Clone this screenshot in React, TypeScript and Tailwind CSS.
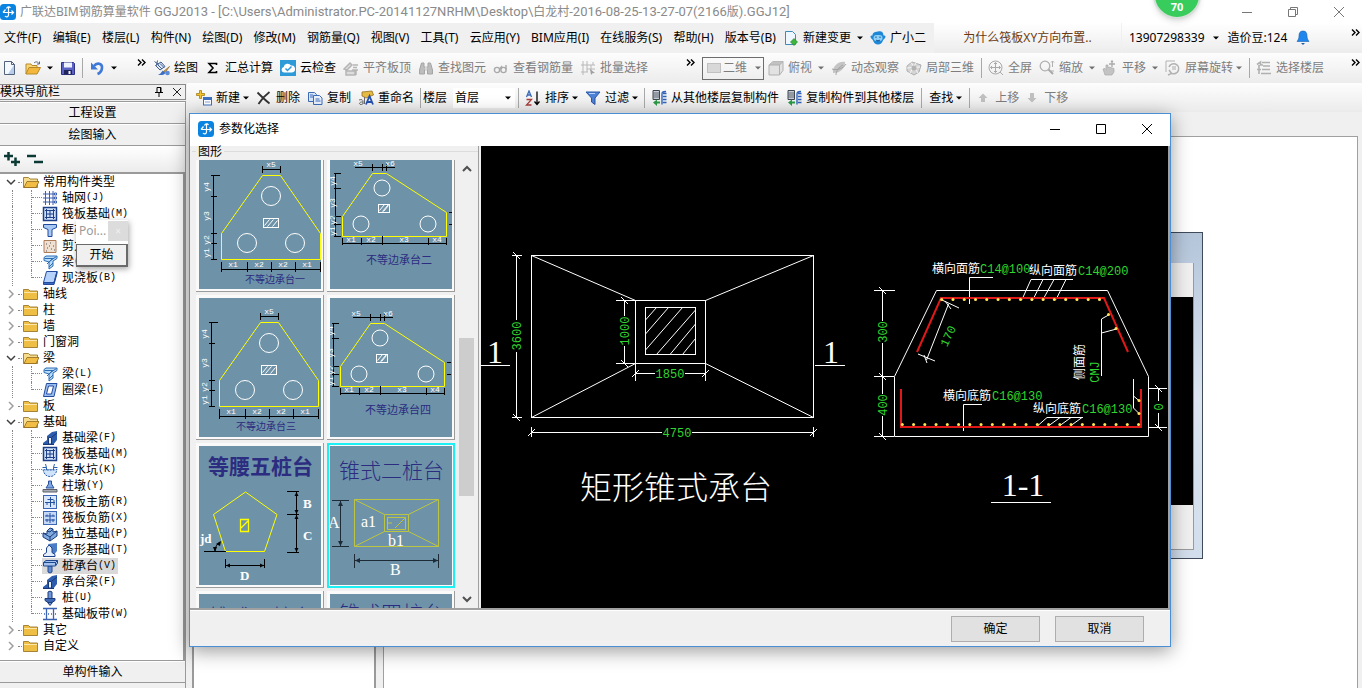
import React from 'react';

/* ---------- small shared pieces ---------- */

const Ico: React.FC<{ children: React.ReactNode; className?: string }> = ({ children, className = '' }) => (
  <svg viewBox="0 0 16 16" className={`h-4 w-4 shrink-0 ${className}`} fill="none" aria-hidden="true">
    {children}
  </svg>
);

const Caret: React.FC<{ className?: string }> = ({ className = 'text-black' }) => (
  <svg viewBox="0 0 6 4" className={`h-1 w-1.5 shrink-0 ${className}`} aria-hidden="true">
    <path d="M0 0.5h6L3 3.5z" fill="currentColor" />
  </svg>
);

const More: React.FC = () => (
  <svg viewBox="0 0 9 7" className="h-[7px] w-[9px] shrink-0" fill="none" stroke="#000" strokeWidth="1.4" aria-hidden="true">
    <path d="M1 0.5l3 3-3 3M5 0.5l3 3-3 3" />
  </svg>
);

const Sep: React.FC<{ className?: string }> = ({ className = '' }) => <span className={`h-5 w-px shrink-0 bg-[#a8a8a8] ${className}`} />;

const Logo: React.FC = () => (
  <Ico>
    <rect width="16" height="16" rx="3.5" fill="#0a84e0" />
    <path d="M3 8.5h10M8.500 3v8c0 2-2.500 2.500-3.500 1M5.500 5.500L3 8.500M11.500 6.500l2 2-2 2M6.500 4.500c1-2 3-2 4-.5" stroke="#fff" strokeWidth="1.200" />
  </Ico>
);

interface ToolProps {
  icon?: React.ReactNode;
  label: string;
  caret?: 'near' | 'far';
  disabled?: boolean;
}

const Tool: React.FC<ToolProps> = ({ icon, label, caret, disabled }) => (
  <button disabled={disabled} className={`flex shrink-0 items-center whitespace-nowrap ${disabled ? 'text-[#7d7d7d]' : 'text-black'}`}>
    {icon}
    <span className={icon ? 'ml-1' : ''}>{label}</span>
    {caret && <Caret className={`${caret === 'far' ? 'ml-1.5' : 'ml-[3px]'} ${disabled ? 'text-[#707070]' : 'text-black'}`} />}
  </button>
);

/* ---------- toolbar icons ---------- */

const NewIcon = () => (
  <Ico>
    <path d="M2.500 1.500h7l3 3v10h-10z" fill="#f4f8ff" stroke="#53627c" />
    <path d="M9.500 1.500v3h3" stroke="#53627c" />
    <path d="M12 5v9H6z" fill="#b9cdea" />
  </Ico>
);
const OpenIcon = () => (
  <Ico>
    <path d="M1 14V4h5l1 1.500h5V8" fill="#f8d675" stroke="#b8892a" />
    <path d="M1 14L4 7.500h11.500L12 14z" fill="#f3b73b" stroke="#b8892a" />
    <path d="M9 3c2-2 4-1 5 .5M14.500 1.500v2.500H12" stroke="#54677f" />
  </Ico>
);
const SaveIcon = () => (
  <Ico>
    <path d="M1.500 2.500h12l1 1v11h-13z" fill="#5b62c4" stroke="#2d3287" />
    <path d="M4 2.500h8v5H4z" fill="#eef2ff" />
    <path d="M4 10h8v4.500H4z" fill="#20245c" />
    <path d="M8.500 11h2v3h-2z" fill="#eef2ff" />
  </Ico>
);
const UndoIcon = () => (
  <Ico>
    <path d="M5 6C8 2 13.500 3.500 13 8c-.3 3-2 5-4.500 6" stroke="#3f7ad6" strokeWidth="2.600" />
    <path d="M2 2.500v7h7z" fill="#3f7ad6" />
  </Ico>
);
const DrawIcon = () => (
  <Ico>
    <path d="M1.500 5.500L7 2l4 4.500-5 3.500z" fill="#dfe8f6" stroke="#3d5d91" />
    <path d="M0.500 1.500l4 3M3.500 0.500l-1 5M4 5l4 4M6 3.500l4 4" stroke="#3d5d91" />
    <path d="M15.500 6.500L10 11l1 1.500z" fill="#e0a63a" stroke="#8a6420" strokeWidth=".7" />
    <path d="M9 10.500l2.500 2.500C9.500 15.500 6 15.500 4 14.500c3-.5 3-2.500 5-4z" fill="#3c6fc4" />
    <circle cx="13.500" cy="13" r="2.300" fill="#5b8ad8" />
  </Ico>
);
const SigmaIcon = () => (
  <Ico>
    <path d="M11.500 5V3.500H4L8 8l-4 4.500h7.500V11" stroke="#000" strokeWidth="1.600" />
  </Ico>
);
const CloudIcon = () => (
  <Ico>
    <rect width="16" height="16" fill="#2e9bd8" />
    <path d="M4 12.500a2.800 2.800 0 0 1-.3-5.500A4 4 0 0 1 11 5.500a3.500 3.500 0 0 1 1 7z" fill="#fff" />
    <path d="M5.500 8.500l2 2L11.500 6.500" stroke="#2e9bd8" strokeWidth="1.500" />
  </Ico>
);
const AlignIcon = () => (
  <Ico>
    <path d="M1 9l6-6 2 2-5 5zM3 15v-4h9v4zM10 5h5M10 7.500h4M9 10h6M13 10v5" stroke="#b5b5b5" strokeWidth="1.500" fill="#dcdcdc" />
  </Ico>
);
const FindIcon = () => (
  <Ico>
    <path d="M3.500 3h2.500v4h4V3h2.500l2 7v4h-5v-4h-3v4h-5v-4z" fill="#bdbdbd" stroke="#a5a5a5" />
    <path d="M8 3v9" stroke="#f4f4f4" />
  </Ico>
);
const GlassIcon = () => (
  <Ico>
    <circle cx="4" cy="10" r="2.600" stroke="#a9a9a9" strokeWidth="1.400" />
    <circle cx="10.500" cy="10" r="2.600" stroke="#a9a9a9" strokeWidth="1.400" />
    <path d="M6.500 9.500L9 6M13 9.500V5" stroke="#a9a9a9" strokeWidth="1.400" />
  </Ico>
);
const BatchIcon = () => (
  <Ico>
    <path d="M3 1v14M1 5h14M1 12h7M7 1v11M7 9h8M11 5v6M13 2v3" stroke="#b8b8b8" />
    <path d="M10 9l5 4-2.500.3L11 15z" fill="#a0a0a0" />
  </Ico>
);
const BoxIcon = () => (
  <Ico>
    <path d="M1 5l4-3.500h10v9L11.500 15H1z" fill="#e2e2e2" stroke="#b0b0b0" />
    <path d="M1 5l4-3.500h10L11.500 5z" fill="#c2c2c2" />
    <path d="M1 5h10.500v10M11.500 5L15 1.500" stroke="#b0b0b0" />
  </Ico>
);
const OrbitIcon = () => (
  <Ico>
    <path d="M2 13C1 6 8 1 14 2c0 6-4 11-12 11z" fill="#c4c4c4" />
    <path d="M1 9c5 2 12-1 14-5M5 15c0-4 3-8 7-10" stroke="#a3a3a3" />
  </Ico>
);
const LocalIcon = () => (
  <Ico>
    <path d="M1 6l5-4 9 3-2 7-5 3-7-4z" fill="#d4d4d4" stroke="#adadad" />
    <path d="M5 2.500L12 13M10 3L4 13M1 8l13-1" stroke="#f6f6f6" />
    <circle cx="8" cy="8" r="2.500" fill="#b2b2b2" />
  </Ico>
);
const FullIcon = () => (
  <Ico>
    <circle cx="7.500" cy="7.500" r="6.500" stroke="#a9a9a9" />
    <path d="M7.500 2.500v10M2.500 7.500h10M6 4l1.500-1.500L9 4M6 11l1.500 1.500L9 11M4 6L2.500 7.500 4 9M11 6l1.500 1.500L11 9M12 12l3 3" stroke="#a9a9a9" />
  </Ico>
);
const ZoomIcon = () => (
  <Ico>
    <circle cx="6" cy="6" r="4.800" stroke="#b0b0b0" strokeWidth="1.300" />
    <path d="M9.500 9.500L14 14" stroke="#a8a8a8" strokeWidth="2" />
    <path d="M13.500 1v6M12 2.500L13.500 1 15 2.500M11 11h4" stroke="#b0b0b0" />
  </Ico>
);
const PanIcon = () => (
  <Ico>
    <path d="M3 15L1 9l2-.5 1 1V5h2v3l1-1 5 1.500V12l-2 3z" fill="#c3c3c3" stroke="#aaa" strokeWidth=".7" />
    <path d="M10 1v6M7 4h6M9 2l1-1 1 1" stroke="#aaa" strokeWidth="1.300" />
  </Ico>
);
const RotateIcon = () => (
  <Ico>
    <path d="M1 12V1h9" stroke="#b2b2b2" />
    <path d="M4 7a5 5 0 1 1 3 6.500M4 10l2.500 3.500L3 15" stroke="#b2b2b2" strokeWidth="1.600" />
    <rect x="7" y="6" width="4" height="4" fill="#d0d0d0" />
  </Ico>
);
const FloorIcon = () => (
  <Ico>
    <path d="M1 4.500L4.500 2v3H7M6 2.500h8M7 6h7M6 9.500h8M5 13.500h10M3 5v9M1 9.500h4" stroke="#b0b0b0" strokeWidth="1.600" />
  </Ico>
);
const AddIcon = () => (
  <Ico>
    <path d="M3.500 0.500h2v3h3v2h-3v3h-2v-3h-3v-2h3z" fill="#f2c230" stroke="#a47d14" strokeWidth=".8" />
    <rect x="7.500" y="7.500" width="8" height="7.500" fill="#fff" stroke="#3f6fc0" />
    <path d="M7.500 8h8v2h-8z" fill="#3f6fc0" />
    <path d="M9 12h5" stroke="#8aa7da" />
  </Ico>
);
const DeleteIcon = () => (
  <Ico>
    <path d="M1.500 2.500c3 3 7 7 12 11M13.500 2c-4 3-8 7-11 12" stroke="#333" strokeWidth="1.800" />
  </Ico>
);
const CopyIcon = () => (
  <Ico>
    <path d="M1.500 2.500h6l2 2v7h-8z" fill="#d8e6fb" stroke="#3c6bb8" />
    <path d="M6.500 5.500h6l2.500 2.500v6.500H6.500z" fill="#e9f1ff" stroke="#3c6bb8" />
    <path d="M8.500 9h4M8.500 11h5M3 5h3M3 7h3" stroke="#3c6bb8" />
  </Ico>
);
const RenameIcon = () => (
  <Ico>
    <path d="M4 2l10-1 1.500 4L8 8 4 6z" fill="#e5bb45" stroke="#937020" strokeWidth=".8" />
    <path d="M8 14.500L11.500 6l3.500 8.500M9.500 12h4.500" stroke="#2450b0" strokeWidth="1.800" />
    <path d="M1 10c3-1 4 0 4 1.500V14M5 12c-4-.5-4.500 2.500-2 2.500 1 0 2-.5 2-1M6.500 7v7" stroke="#6b6b6b" />
  </Ico>
);
const SortIcon = () => (
  <Ico>
    <path d="M1.500 7L4 1l2.500 6M2.500 5h3" stroke="#3a68b8" strokeWidth="1.300" />
    <path d="M1.500 9.500h5l-5 5.500h5" stroke="#a83c3c" strokeWidth="1.300" />
    <path d="M12 1.500V14M9.500 11.500L12 14.500l2.500-3" stroke="#000" strokeWidth="1.300" />
  </Ico>
);
const FilterIcon = () => (
  <Ico>
    <path d="M1 2h14L10 8v6.500L6.500 12V8z" fill="#4d82d6" stroke="#2a57a5" />
    <path d="M4 3.500h6" stroke="#b5d0fa" />
  </Ico>
);
const FloorCopyIcon = () => (
  <Ico>
    <path d="M2 0.500h6.500v9H2z" fill="#c9ced6" stroke="#3f454f" />
    <path d="M2 3h6M2 5h6M2 7h6" stroke="#5f6672" />
    <path d="M12 3.500h3.500M12 6.500h3.500M12 9.500h3.500M12 12.500h3.500M15 1.500c-4 0-4 1-4 3v10" stroke="#2f62b8" strokeWidth="1.400" />
    <path d="M9 13.500H6V16l-4-3.500L6 9.500v2h3z" fill="#2c9a45" />
  </Ico>
);
const ArrowIcon: React.FC<{ down?: boolean }> = ({ down }) => (
  <svg viewBox="0 0 14 16" className="h-4 w-3.5 shrink-0" aria-hidden="true">
    <path d={down ? 'M4 3h4v5h2.500L6 12.500 1.500 8H4z' : 'M4 12h4V8h2.500L6 3.500 1.500 8H4z'} fill="#c0c0c0" />
  </svg>
);

/* ---------- top bars ---------- */

const titleLatin = "font-['Roboto',sans-serif] text-[13px]";

const TitleBar: React.FC = () => (
  <header className="flex h-[23px] items-center bg-white text-[#8a8a8a]">
    <Logo />
    <h1 className="ml-1 flex-1 whitespace-nowrap">
      广联达BIM钢筋算量软件{' '}
      <span className={titleLatin}>GGJ2013 - [C:\Users\Administrator.PC-20141127NRHM\Desktop\</span>白龙村
      <span className={titleLatin}>-2016-08-25-13-27-07(2166</span>版<span className={titleLatin}>).GGJ12]</span>
    </h1>
    <div className="flex items-center gap-9 pr-[18px]">
      <button aria-label="最小化">
        <svg viewBox="0 0 10 10" className="h-2.5 w-2.5" stroke="#777"><path d="M0 5.500h10" /></svg>
      </button>
      <button aria-label="还原">
        <svg viewBox="0 0 10 10" className="h-2.5 w-2.5" stroke="#777" fill="none"><path d="M0.500 2.500h7v7h-7zM2.500 2.500v-2h7v7h-2" /></svg>
      </button>
      <button aria-label="关闭">
        <svg viewBox="0 0 10 10" className="h-2.5 w-2.5" stroke="#777"><path d="M0 0l10 10M10 0L0 10" /></svg>
      </button>
    </div>
  </header>
);

const menus = ['文件(F)', '编辑(E)', '楼层(L)', '构件(N)', '绘图(D)', '修改(M)', '钢筋量(Q)', '视图(V)', '工具(T)', '云应用(Y)', 'BIM应用(I)', '在线服务(S)', '帮助(H)', '版本号(B)'];

const MenuBar: React.FC = () => (
  <nav className="flex h-[30px] bg-[#f0f0f0]">
    <div className="flex w-[934px] shrink-0 items-center gap-[7px] pl-1">
      <div className="flex w-[772px] justify-between">
        {menus.map((m) => (
          <button key={m} className="whitespace-nowrap">{m}</button>
        ))}
      </div>
      <Tool
        caret="far"
        label="新建变更"
        icon={
          <Ico>
            <path d="M2.500 1.500h7l3 3v10h-10z" fill="#eef6ff" stroke="#3e8ab8" />
            <path d="M11 8.500l3.500 3.500-3.500 3.500L7.500 12z" fill="#3cb53c" stroke="#1f7a1f" strokeWidth=".6" />
          </Ico>
        }
      />
      <Tool
        label="广小二"
        icon={
          <Ico>
            <path d="M8 1.500C12 0.500 13.500 3 13.500 5.500c2-.5 2.500 1 1.500 2.500s-2 1.500-2 2.500c-1 2.500-2.500 4-5 4s-4-1.500-5-4c0-1-1-1-2-2.500s-.5-3 1.500-2.500C2.500 3 4 2 8 1.500z" fill="#1e88d8" />
            <rect x="3.500" y="5" width="9" height="6" rx="3" fill="#8fd0f8" />
            <path d="M6 6.500v1.500M10 6.500v1.500M6 10c1 1 3 1 4 0" stroke="#10508c" />
          </Ico>
        }
      />
    </div>
    <div className="flex w-[187px] shrink-0 items-center justify-center bg-gradient-to-b from-white to-[#ececec]">
      <a href="#news" className="text-[#6b3a10]">为什么筏板XY方向布置..</a>
    </div>
    <div className="ml-px flex flex-1 items-center bg-gradient-to-b from-white to-[#ececec] pr-0.5 pl-[7px]">
      <button className="flex items-center gap-2">13907298339<Caret /></button>
      <span className="ml-[9px] whitespace-nowrap">造价豆:124</span>
      <button aria-label="消息" className="ml-2">
        <Ico>
          <path d="M8 1c3 0 4 2 4 5 0 2.500 1 4 2 5.500H2C3 10 4 8.500 4 6c0-3 1-5 4-5z" fill="#1f86ee" stroke="#1f5fae" strokeWidth=".6" />
          <path d="M6 13h4l-2 2z" fill="#1f5fae" />
        </Ico>
      </button>
      <span className="mb-3 ml-auto"><More /></span>
    </div>
  </nav>
);

const MainToolbar: React.FC = () => (
  <div className="flex h-[30px] items-center bg-gradient-to-b from-[#fdfdfd] to-[#ececec]">
    <div className="flex w-[150px] shrink-0 items-center pl-0.5">
      <button aria-label="新建"><NewIcon /></button>
      <button aria-label="打开" className="ml-[7px] flex items-center gap-1.5"><OpenIcon /><Caret /></button>
      <button aria-label="保存" className="mr-1.5 ml-[7px]"><SaveIcon /></button>
      <Sep />
      <button aria-label="撤销" className="ml-1.5 flex items-center gap-1.5"><UndoIcon /><Caret /></button>
      <span className="mr-1 mb-3 ml-auto"><More /></span>
    </div>
    <div className="flex w-[552px] shrink-0 items-center gap-[7px] pl-1">
      <Tool icon={<DrawIcon />} label="绘图" />
      <Tool icon={<SigmaIcon />} label="汇总计算" />
      <Tool icon={<CloudIcon />} label="云检查" />
      <Tool icon={<AlignIcon />} label="平齐板顶" disabled />
      <Tool icon={<FindIcon />} label="查找图元" disabled />
      <Tool icon={<GlassIcon />} label="查看钢筋量" disabled />
      <Tool icon={<BatchIcon />} label="批量选择" disabled />
      <span className="mr-[7px] mb-3 ml-auto"><More /></span>
    </div>
    <label className="mr-1 flex h-[23px] w-[62px] shrink-0 items-center border border-[#6d6d6d] pl-1 text-[#7d7d7d]">
      <span className="h-2.5 w-3.5 border border-[#c0c0c0] bg-[#d8d8d8]" />
      <select aria-label="视图模式" className="ml-0.5 w-8 appearance-none bg-transparent" disabled>
        <option>二维</option>
      </select>
      <Caret className="text-[#707070]" />
    </label>
    <div className="flex flex-1 items-center gap-[7px]">
      <Tool icon={<BoxIcon />} label="俯视" caret="far" disabled />
      <Tool icon={<OrbitIcon />} label="动态观察" disabled />
      <Tool icon={<LocalIcon />} label="局部三维" disabled />
      <Sep className="-mr-px" />
      <Tool icon={<FullIcon />} label="全屏" disabled />
      <Tool icon={<ZoomIcon />} label="缩放" caret="far" disabled />
      <Tool icon={<PanIcon />} label="平移" caret="far" disabled />
      <Tool icon={<RotateIcon />} label="屏幕旋转" caret="near" disabled />
      <Sep className="-mr-px" />
      <Tool icon={<FloorIcon />} label="选择楼层" disabled />
      <span className="mr-0.5 mb-3 ml-auto"><More /></span>
    </div>
  </div>
);

const ComponentToolbar: React.FC = () => (
  <div className="flex h-[29px] shrink-0 items-center gap-[7px] bg-gradient-to-b from-[#fdfdfd] to-[#ebebeb] pl-[9px]">
    <Tool icon={<AddIcon />} label="新建" caret="near" />
    <Tool icon={<DeleteIcon />} label="删除" />
    <Tool icon={<CopyIcon />} label="复制" />
    <Tool icon={<RenameIcon />} label="重命名" />
    <Sep className="-mx-px" />
    <label className="-ml-1 flex shrink-0 items-center whitespace-nowrap">
      楼层
      <span className="ml-1.5 flex h-5 items-center bg-white pr-1">
        <select className="w-[52px] appearance-none bg-transparent pl-0.5">
          <option>首层</option>
        </select>
        <Caret />
      </span>
    </label>
    <Sep className="-mr-px -ml-1" />
    <Tool icon={<SortIcon />} label="排序" caret="near" />
    <Tool icon={<FilterIcon />} label="过滤" caret="near" />
    <Sep className="-mx-px" />
    <Tool icon={<FloorCopyIcon />} label="从其他楼层复制构件" />
    <Tool icon={<FloorCopyIcon />} label="复制构件到其他楼层" />
    <Sep />
    <Tool label="查找" caret="near" />
    <Sep />
    <Tool icon={<ArrowIcon />} label="上移" disabled />
    <Tool icon={<ArrowIcon down />} label="下移" disabled />
  </div>
);

/* ---------- component tree ---------- */

const treeIcons: Record<string, React.ReactNode> = {
  axis: (
    <>
      <path d="M1 4h11M1 8h11M1 12h11M3.500 1v14M7.500 1v14M11 1v14" stroke="#3c5fae" />
      <path d="M12.500 3h2v2h-2zM12.500 7h2v2h-2zM12.500 11h2v2h-2z" stroke="#3c5fae" fill="#fff" />
    </>
  ),
  raft: (
    <>
      <rect x="1.500" y="1.500" width="13" height="13" stroke="#1d3f85" fill="#cfe0fa" strokeWidth="1.500" />
      <path d="M4.500 3v10M11.500 3v10M3 4.500h10M3 11.500h10M8 4.500v7M4.500 8h7" stroke="#1d3f85" />
    </>
  ),
  column: <path d="M1.500 2.500h13v3L10 7.500v7H6v-7L1.500 5.500z" fill="#a8c8f4" stroke="#1f4a9c" />,
  wall: (
    <>
      <path d="M2 2.500h12v12H2z" fill="#efe0d2" stroke="#b07c58" />
      <path d="M4 6h1M8 5h1M11 8h1M5 10h1M9 11h1M12 12h1M7 8h1M4 13h1" stroke="#555" />
    </>
  ),
  beam: (
    <>
      <path d="M2 3.500L4 2h11v2.500L11 7v5l-4 3V8L2 6.500z" fill="#b8dbf7" stroke="#2b6cb5" />
      <path d="M2.500 4.500h9l3-2M5 10l6-6M7 13l4-4M7 8l5-4" stroke="#2b6cb5" />
    </>
  ),
  slab: (
    <>
      <path d="M4.500 1.500H15l-3 11H1.500z" fill="#b5d2fb" stroke="#234c9e" />
      <path d="M1.500 12.500v2H12l3-11v-2l-3 11z" fill="#3c6ac0" stroke="#234c9e" />
    </>
  ),
  ring: (
    <>
      <path d="M4.500 1.500h10.500l-3 13H1.500z" fill="#9cbdf0" stroke="#234c9e" />
      <path d="M6.500 4h5l-2 8H4.500z" fill="#fff" stroke="#234c9e" />
    </>
  ),
  fbeam: (
    <>
      <path d="M1 15v-2l4-3V6l5-4 5-1v9l-4 5z" fill="#2c5cab" />
      <path d="M6.500 7.500h3V14h-3z" fill="#e4eefc" stroke="#17397a" />
      <path d="M1 14.500h11M10 7l5-4" stroke="#17397a" />
    </>
  ),
  pit: (
    <>
      <path d="M0.500 5.500h4L3.500 2M15.500 5.500h-4l1-3.500M4.500 5.500V8h7V5.500" stroke="#2b61ad" />
      <path d="M1 7.500C2 12 4 14.500 8 14.500s6-2.500 7-7L11.500 8h-7z" fill="#cfe3fb" stroke="#2b61ad" strokeDasharray="2 1" />
    </>
  ),
  pier: (
    <>
      <path d="M1 11.500h14V14H1z" fill="#a9adb5" stroke="#5a5f69" />
      <path d="M6.500 3h3v3l2.500 4H4l2.500-4z" fill="#7da7e4" stroke="#2b4f98" />
    </>
  ),
  main: (
    <>
      <rect x="1.500" y="1.500" width="13" height="13" fill="#dbe8fc" stroke="#3b67b4" />
      <path d="M8.500 3v10M3 8.500h10M5.500 5.500h6M5 8.500V11M12 6v5" stroke="#2450a0" />
    </>
  ),
  neg: (
    <>
      <rect x="1.500" y="1.500" width="13" height="13" fill="#c5d8f8" stroke="#3b67b4" />
      <path d="M8 3v10M3 6h10M3 10h10M5 4.500v2M11 4.500v2M5 9v3M11 9v3" stroke="#2450a0" />
    </>
  ),
  iso: (
    <>
      <path d="M1 7l4 1V5l3-3 3 1v3l4-1v5l-7 5-7-4z" fill="#7fa9df" stroke="#1a3d7c" />
      <path d="M1 7l7 4 7-6M8 11v4M5 5l3 1 3-3" stroke="#1a3d7c" />
    </>
  ),
  strip: (
    <>
      <path d="M6 2l9-1v8l-4 5z" fill="#4b7cc6" />
      <path d="M1.500 14.500v-2l3-2V6L7 3l3 3v4.500l3 2v2z" fill="#e4eefc" stroke="#1c428a" />
    </>
  ),
  cap: (
    <>
      <path d="M6 8h4v6l-2 1-2-1z" fill="#5e8bd0" stroke="#20488f" />
      <path d="M1.500 4.500L4 2.500h11.500v2.500l-2 3h-12z" fill="#a4c2ee" stroke="#20488f" />
      <path d="M1.500 4.500h12v3M13.500 4.500l2-2" stroke="#20488f" />
    </>
  ),
  pile: (
    <>
      <path d="M6 2c1-1 3-1 4 0v11l-2 2.500L6 13z" fill="#6f97d8" stroke="#1d3c7c" />
      <path d="M3 8.500h10v2l-3 2H6l-3-2z" fill="#3c68b4" stroke="#1d3c7c" />
    </>
  ),
  band: <path d="M1 2.500h14M1 13.500h14M4.500 3v10M11.500 3v10M2 8h1M6 8h1M9 8h1M13 8h1" stroke="#3a62b2" strokeWidth="1.300" />,
};

type Leaf = [icon: string, label: string, key: string];
interface Group {
  label: string;
  items?: Leaf[];
}

const groups: Group[] = [
  {
    label: '常用构件类型',
    items: [
      ['axis', '轴网', 'J'],
      ['raft', '筏板基础', 'M'],
      ['column', '框柱', 'Z'],
      ['wall', '剪力墙', 'Q'],
      ['beam', '梁', 'L'],
      ['slab', '现浇板', 'B'],
    ],
  },
  { label: '轴线' },
  { label: '柱' },
  { label: '墙' },
  { label: '门窗洞' },
  { label: '梁', items: [['beam', '梁', 'L'], ['ring', '圈梁', 'E']] },
  { label: '板' },
  {
    label: '基础',
    items: [
      ['fbeam', '基础梁', 'F'],
      ['raft', '筏板基础', 'M'],
      ['pit', '集水坑', 'K'],
      ['pier', '柱墩', 'Y'],
      ['main', '筏板主筋', 'R'],
      ['neg', '筏板负筋', 'X'],
      ['iso', '独立基础', 'P'],
      ['strip', '条形基础', 'T'],
      ['cap', '桩承台', 'V'],
      ['fbeam', '承台梁', 'F'],
      ['pile', '桩', 'U'],
      ['band', '基础板带', 'W'],
    ],
  },
  { label: '其它' },
  { label: '自定义' },
];

const Folder: React.FC<{ open: boolean }> = ({ open }) => (
  <Ico>
    <path d="M0.500 13.500v-10h5l1.500 1.500h7.500v8.500z" fill={open ? '#f6dc8c' : '#efbf45'} stroke="#8f6b1c" strokeWidth=".8" />
    {open ? <path d="M1 13.500L4 7.500h12l-3 6z" fill="#f2bd45" stroke="#8f6b1c" strokeWidth=".8" /> : <path d="M1 6.500h13" stroke="#fbe7a8" />}
  </Ico>
);

const LeafRow: React.FC<{ leaf: Leaf; last: boolean }> = ({ leaf: [icon, label, key], last }) => {
  const selected = label === '桩承台';
  return (
    <li className="flex h-4 items-center">
      <span className="ml-3 h-4 w-[19px] shrink-0 border-l border-dotted border-[#888]" />
      <span className={`w-[11px] shrink-0 self-start border-l border-dotted border-[#888] ${last ? 'h-2' : 'h-4'}`}>
        <span className="block h-2 border-b border-dotted border-[#888]" />
      </span>
      <button className={`flex h-4 items-center whitespace-nowrap ${selected ? 'bg-[#d9d9d9]' : ''}`}>
        <Ico>{treeIcons[icon]}</Ico>
        <span className="ml-1 leading-4">{label}</span>
        <span className="pr-0.5 font-['Liberation_Mono',monospace] text-[10px] leading-4">({key})</span>
      </button>
    </li>
  );
};

const ComponentTree: React.FC = () => (
  <ul className="flex-1 overflow-hidden border-t-2 border-r-2 border-b border-[#9a9a9a] bg-white">
    {groups.map((g) => (
      <li key={g.label + (g.items ? '+' : '')}>
        <button className="flex h-4 items-center pl-1.5 whitespace-nowrap">
          <svg viewBox="0 0 10 10" className="h-2.5 w-2.5" fill="none" strokeWidth="1.500" stroke={g.items ? '#404040' : '#a0a0a0'} aria-hidden="true">
            <path d={g.items ? 'M1 3l4 4 4-4' : 'M3 1l4 4-4 4'} />
          </svg>
          <span className="mr-px ml-0.5 w-1 border-b border-dotted border-[#888]" />
          <Folder open={!!g.items} />
          <span className="ml-1 leading-4">{g.label}</span>
        </button>
        {g.items && (
          <ul>
            {g.items.map((leaf, i) => (
              <LeafRow key={leaf[1]} leaf={leaf} last={i === g.items!.length - 1} />
            ))}
          </ul>
        )}
      </li>
    ))}
  </ul>
);

const panelButton = 'block h-[22px] w-full shrink-0 border-t border-b border-t-white border-b-[#9a9a9a] bg-[#f0f0f0] text-center leading-5';

const Sidebar: React.FC = () => (
  <aside className="flex w-[187px] shrink-0 flex-col bg-[#f0f0f0] pr-px">
    <div className="mt-px flex h-4 items-center border border-l-0 border-[#8a8a8a] pr-[3px]">
      <h2 className="flex-1 leading-4">模块导航栏</h2>
      <button aria-label="固定" className="mr-2">
        <svg viewBox="0 0 10 10" className="h-2.5 w-2.5" fill="none" stroke="#000" aria-hidden="true"><path d="M3 0.500h4v5H3zM1 5.500h8M5 5.500V10M6.500 1v4" /></svg>
      </button>
      <button aria-label="关闭">
        <svg viewBox="0 0 10 10" className="h-2.5 w-2.5" stroke="#222" aria-hidden="true"><path d="M1 1l8 8M9 1L1 9" /></svg>
      </button>
    </div>
    <div className="mt-px flex flex-1 flex-col border-t border-r border-[#9a9a9a]">
      <button className={panelButton}>工程设置</button>
      <button className={panelButton}>绘图输入</button>
      <div className="flex h-[26px] items-center gap-1.5 bg-gradient-to-b from-white to-[#ececec] pl-1">
        <button aria-label="展开">
          <svg viewBox="0 0 17 14" className="h-3.5 w-[17px]" stroke="#0c3b35" strokeWidth="2.500" aria-hidden="true"><path d="M0 4h9M4.500 0v8.500M7 10h9M11.500 5.500V14" /></svg>
        </button>
        <button aria-label="折叠">
          <svg viewBox="0 0 17 14" className="h-3.5 w-[17px]" stroke="#0c3b35" strokeWidth="2.500" aria-hidden="true"><path d="M0 4h9M7 10h9" /></svg>
        </button>
      </div>
      <ComponentTree />
      <button className={panelButton}>单构件输入</button>
      <div className="h-[5px]" />
    </div>
  </aside>
);

/* ---------- gallery thumbnails ---------- */

const Hatch: React.FC<{ x: number; y: number; w: number; h: number }> = ({ x, y, w, h }) => (
  <g stroke="#fff" fill="none">
    <rect x={x} y={y} width={w} height={h} />
    <path d={`M${x + 1} ${y + h - 2}l5-6M${x + 4} ${y + h - 1}l6-7M${x + w - 6} ${y + h - 1}l5-6`} />
  </g>
);

const tiny = "font-['Liberation_Mono',monospace] text-[8px] fill-white";
const caption = "font-['Noto_Sans_CJK_SC',sans-serif] fill-[#2c2c80]";

const VLabel: React.FC<{ x: number; y: number; children: string }> = ({ x, y, children }) => (
  <text transform={`translate(${x} ${y}) rotate(-90)`} textAnchor="middle" className={tiny}>{children}</text>
);

const SymmetricCap: React.FC = () => (
  <>
    <path d="M63.500 25.500h18l40 58v26h-99v-26z" stroke="#ff0" fill="none" />
    <g stroke="#fff" fill="none">
      <circle cx="72" cy="46" r="9.500" />
      <circle cx="48" cy="93" r="9.500" />
      <circle cx="96" cy="93" r="9.500" />
    </g>
    <Hatch x={64.5} y={68.5} w={15} h={9} />
    <path d="M14.500 25v85M12 25.500h9M12 46.500h6M12 83.500h6M12 93.500h6M12 109.500h6M22 119.500h100M22.500 112v10M48.500 112v10M72.500 112v10M96.500 112v10M121.500 112v10M63 19.500h18M63.500 16v7M81.500 16v7" stroke="#000" fill="none" />
    <g className={tiny} textAnchor="middle">
      <text x="72" y="17">x5</text>
      <text x="34" y="117">x1</text>
      <text x="60" y="117">x2</text>
      <text x="84" y="117">x2</text>
      <text x="108" y="117">x1</text>
    </g>
    <VLabel x={10} y={37}>y4</VLabel>
    <VLabel x={10} y={66}>y3</VLabel>
    <VLabel x={10} y={90}>y2</VLabel>
    <VLabel x={10} y={103}>y1</VLabel>
  </>
);

const SkewedCap: React.FC = () => (
  <>
    <path d="M42.500 23.500h14l60 39v24h-104v-20z" stroke="#ff0" fill="none" />
    <g stroke="#fff" fill="none">
      <circle cx="52" cy="38" r="8" />
      <circle cx="31" cy="74" r="8" />
      <circle cx="98" cy="74" r="8" />
    </g>
    <Hatch x={48.5} y={54.5} w={11} h={8} />
    <path d="M5.500 23v63M4 23.500h7M4 38.500h7M4 66.500h7M4 74.500h7M4 86.500h7M13 93.500h104M12.500 88v7M31.500 88v7M52.500 86v9M98.500 88v7M116.500 88v7M25 17.500h40M42.500 14v7M52.500 14v7M56.500 14v7M119 62.500h4M119 74.500h4" stroke="#000" fill="none" />
    <g className={tiny} textAnchor="middle">
      <text x="28" y="16">x5</text>
      <text x="60" y="16">x6</text>
      <text x="21" y="92">x1</text>
      <text x="41" y="92">x2</text>
      <text x="74" y="92">x3</text>
      <text x="107" y="92">x4</text>
    </g>
    <VLabel x={5} y={31}>y4</VLabel>
    <VLabel x={5} y={53}>y3</VLabel>
    <VLabel x={5} y={70}>y2</VLabel>
    <VLabel x={5} y={81}>y1</VLabel>
  </>
);

const Pentagon: React.FC = () => (
  <>
    <text x="9" y="28" className={`${caption} text-[21px] font-bold`}>等腰五桩台</text>
    <path d="M46.500 46L78 68.500 65.500 105.500h-39L14.500 68.500z" stroke="#ff0" fill="none" />
    <path d="M41.500 73.500h8v12h-8zM42 82l7-7" stroke="#ff0" fill="none" strokeWidth="1.300" />
    <path d="M97.500 46v60M88 45.500h12M88 68.500h12M88 106.500h12M26.500 113v9M65.500 113v9M27 119.500h38M5 105.500h22M16 105c0-4 2-7 5-9" stroke="#000" fill="none" />
    <path d="M95.500 50l2-4 2 4zM95.500 64l2 4 2-4zM95.500 73l2-4 2 4zM95.500 102l2 4 2-4zM31 117.500l-4 2 4 2zM61 117.500l4 2-4 2zM17 98l5-3-1 5zM14 101l2 5 2-5z" />
    <g className="fill-white font-['Liberation_Serif',serif] text-[13px] font-bold">
      <text x="104" y="62">B</text>
      <text x="104" y="94">C</text>
      <text x="41" y="134">D</text>
      <text x="1" y="97">jd</text>
    </g>
  </>
);

const TwoPile: React.FC = () => (
  <>
    <text x="9" y="32" className={`${caption} text-[21px] font-light`}>锥式二桩台</text>
    <path d="M24.500 53.500h84v47h-84zM54.500 68.500h24v17h-24zM57.500 71.500h18v12h-18zM24.500 53.500l30 15M108.500 53.500l-30 15M24.500 100.500l30-15M108.500 100.500l-30-15M65 82l10-10M58 77h4" stroke="#bcc443" fill="none" />
    <path d="M10.500 55v45M2 54.500h17M2 100.500h17M24.500 108v14M108.500 108v14M25 114.500h83" stroke="#1c2b35" fill="none" />
    <path d="M8 60l2.500-5 2.500 5zM8 95l2.500 5 2.500-5zM30 112l-5 2.500 5 2.500zM103 112l5 2.500-5 2.500z" fill="#1c2b35" />
    <g className="fill-white font-['Liberation_Serif',serif] text-[16px]">
      <text x="-2" y="82">A</text>
      <text x="31" y="81">a1</text>
      <text x="58" y="100">b1</text>
      <text x="60" y="129">B</text>
    </g>
  </>
);

const Thumb: React.FC<{ name: string; selected?: boolean; children: React.ReactNode }> = ({ name, selected, children }) => (
  <button
    aria-label={name}
    className={`h-[145px] w-32 bg-[#fafafa] ${selected ? 'border-2 border-[#1cf0f4] p-px' : 'border-r border-b border-[#9c9c9c] pt-[3px] pr-0.5 pb-0.5 pl-[3px]'}`}
  >
    <svg viewBox="0 0 122 139" className="h-[139px] w-[122px] bg-[#6e93a8]">{children}</svg>
  </button>
);

const Gallery: React.FC = () => (
  <fieldset className="relative ml-0.5 h-[462px] w-[286px] min-w-0 shrink-0 px-1 pt-3.5">
    <span className="absolute top-[5px] right-0 left-0 h-px bg-[#dcdcdc]" />
    <legend className="absolute top-0 left-1 z-10 bg-[#f0f0f0] px-0.5 leading-3">图形</legend>
    <div className="flex h-[448px] overflow-hidden">
      <div className="-mt-[13px] mr-auto grid shrink-0 grid-cols-2 content-start gap-[3px]">
        <Thumb name="不等边承台一">
          <SymmetricCap />
          <text x="46" y="133" className={`${caption} text-[10px]`}>不等边承台一</text>
        </Thumb>
        <Thumb name="不等边承台二">
          <SkewedCap />
          <text x="36" y="114" className={`${caption} text-[11px]`}>不等边承台二</text>
        </Thumb>
        <Thumb name="不等边承台三">
          <g transform="translate(-2 -1)"><SymmetricCap /></g>
          <text x="37" y="132" className={`${caption} text-[10px]`}>不等边承台三</text>
        </Thumb>
        <Thumb name="不等边承台四">
          <g transform="translate(-2 2)"><SkewedCap /></g>
          <text x="35" y="116" className={`${caption} text-[11px]`}>不等边承台四</text>
        </Thumb>
        <Thumb name="等腰五桩台"><Pentagon /></Thumb>
        <Thumb name="锥式二桩台" selected><TwoPile /></Thumb>
        <Thumb name="锥式三桩台">
          <text x="10" y="30" className={`${caption} text-[21px] font-light`}>锥式三桩台</text>
        </Thumb>
        <Thumb name="锥式四桩台">
          <text x="9" y="27" className={`${caption} text-[21px] font-light`}>锥式四桩台</text>
        </Thumb>
      </div>
      <div className="flex w-[15px] shrink-0 flex-col items-center bg-[#f0f0f0] py-1">
        <svg viewBox="0 0 10 10" className="h-2.5 w-2.5" stroke="#505050" strokeWidth="2" fill="none" aria-hidden="true"><path d="M1 7l4-4 4 4" /></svg>
        <span className="mt-[164px] h-[158px] w-[15px] bg-[#cdcdcd]" />
        <svg viewBox="0 0 10 10" className="mt-auto h-2.5 w-2.5" stroke="#505050" strokeWidth="2" fill="none" aria-hidden="true"><path d="M1 3l4 4 4-4" /></svg>
      </div>
    </div>
  </fieldset>
);

/* ---------- CAD preview ---------- */

const green = "fill-[#2fd62f] font-['Liberation_Mono',monospace] text-[12px]";
const white = "fill-white font-['Noto_Sans_CJK_SC',sans-serif] text-[12px]";

const VDim: React.FC<{ x: number; y: number; children: string; angle?: number; className?: string }> = ({ x, y, children, angle = -90, className = green }) => (
  <text transform={`translate(${x} ${y}) rotate(${angle})`} textAnchor="middle" dy="4" className={className}>{children}</text>
);

const topBars = Array.from({ length: 15 }, (_, i) => 941.7 + i * 11.27);
const bottomBars = Array.from({ length: 22 }, (_, i) => 902.3 + i * 11.25);

const PlanView: React.FC = () => (
  <g>
    <g stroke="#fff" fill="none">
      <path d="M531.500 255.500h282v162h-282zM635.500 300.500h70v63h-70zM645.500 307.500h50v47h-50z" shapeRendering="crispEdges" />
      <path d="M531.500 255.500l104 45M813.500 255.500l-108 45M531.500 417.500l104-54M813.500 417.500l-108-54" />
      <path d="M645.500 320l11-12.500M645.500 334l23-26.500M645.500 350l37-42.500M656.500 354.500l39-44.500M670 354.500l25.500-30.500M682.500 354.500l13-16" />
      <path d="M516.500 255v65M516.500 352v66M512 255.500h10M512 417.500h10M513 252l7 7M513 414l7 7" />
      <path d="M624.500 300v16M624.500 346v18M616 300.500h20M616 363.500h20M621 297l7 7M621 360l7 7" />
      <path d="M635.500 363v18M705.500 363v18M635 373.500h20M685 373.500h21M632 377l7-7M702 377l7-7" />
      <path d="M531.500 427v10M813.500 427v10M531 432.500h131M692 432.500h122M528 436l7-7M810 436l7-7" />
      <path d="M481 365.500h29M815 365.500h30" />
    </g>
    <VDim x={516.5} y={336}>3600</VDim>
    <VDim x={624.5} y={331}>1000</VDim>
    <text x="670" y="378" textAnchor="middle" className={green}>1850</text>
    <text x="677" y="437" textAnchor="middle" className={green}>4750</text>
    <g className="fill-white font-['Liberation_Serif',serif] text-[32px]" textAnchor="middle">
      <text x="495" y="363">1</text>
      <text x="831" y="363">1</text>
    </g>
    <text x="580" y="499" className="fill-white font-['Noto_Sans_CJK_SC',sans-serif] text-[32px] font-light">矩形锥式承台</text>
  </g>
);

const SectionView: React.FC = () => (
  <g>
    <g stroke="#fff" fill="none">
      <path d="M936.500 290.500h171l41 86v60h-254v-60z" />
      <path d="M882.500 290v31M882.500 343v51M882.500 416v21M874 290.500h21M874 376.500h20M874 436.500h20M879 287l7 7M879 373l7 7M879 433l7 7" />
      <path d="M1158.500 388v13M1158.500 413v15M1149 388.500h18M1149 427.500h18M1155 385l7 7M1155 424l7 7" />
      <path d="M948.500 304L926.500 360M942 300l17 8M918 354l17 7M945 301l6 8M924 355l3 8" />
      <path d="M969.500 304v-26.500H993M1031 279.500h42M1031 279.500l-9 20M1043 279.500l-10 20M1054 279.500l-11 20M1066 279.500l-10 20" />
      <path d="M1101.500 376v-57l7-4M1101.500 333l15-4M963.500 431v-26.500H982" />
      <path d="M1047 417.500h36M1047 417.500l-9 8M1060 417.500l-11 8M1071 417.500l-11 8M1082 417.500l-11 8" />
      <path d="M1133.500 379v29l6 6M1133.500 396l6 5M991 502.500h60" />
    </g>
    <path d="M917 352L941 298h163l24 54M901 389v38h240v-38" stroke="#e01818" strokeWidth="2" fill="none" />
    <g fill="#ffe65a">
      {topBars.map((x) => <circle key={x} cx={x} cy="299.500" r="1.500" />)}
      {bottomBars.map((x) => <circle key={x} cx={x} cy="424.500" r="1.500" />)}
      <circle cx="1108.500" cy="314.500" r="1.500" />
      <circle cx="1116" cy="328.500" r="1.500" />
      <circle cx="1139" cy="400.500" r="1.500" />
      <circle cx="1139" cy="413.500" r="1.500" />
    </g>
    <VDim x={882.5} y={332}>300</VDim>
    <VDim x={882.5} y={405}>400</VDim>
    <VDim x={1158.5} y={407}>0</VDim>
    <VDim x={948} y={336} angle={-65}>170</VDim>
    <VDim x={1080} y={362} className={white}>侧面筋</VDim>
    <VDim x={1095} y={372}>CMJ</VDim>
    <g className={white}>
      <text x="932" y="273">横向面筋</text>
      <text x="1029" y="275">纵向面筋</text>
      <text x="943" y="400">横向底筋</text>
      <text x="1033" y="413">纵向底筋</text>
    </g>
    <g className={green}>
      <text x="980" y="273">C14@100</text>
      <text x="1078" y="275">C14@200</text>
      <text x="992" y="400">C16@130</text>
      <text x="1082" y="413">C16@130</text>
    </g>
    <text x="1023" y="496" textAnchor="middle" className="fill-white font-['Liberation_Serif',serif] text-[32px]">1-1</text>
  </g>
);

const Preview: React.FC = () => (
  <div className="ml-auto h-[462px] w-[687px] shrink-0 bg-black">
    <svg viewBox="481 146 687 462" className="block h-full w-full" role="img" aria-label="矩形锥式承台">
      <PlanView />
      <SectionView />
    </svg>
  </div>
);

const ParameterDialog: React.FC = () => (
  <section
    role="dialog"
    aria-label="参数化选择"
    className="absolute top-[113px] left-[189px] z-20 w-[982px] border border-[#4a8fd6] bg-[#f0f0f0] shadow-[0_4px_18px_rgba(0,0,0,0.4)]"
  >
    <div className="flex h-8 items-center bg-white pr-[18px] pb-0.5 pl-2">
      <Logo />
      <h2 className="ml-[5px] flex-1">参数化选择</h2>
      <div className="flex gap-9">
        <button aria-label="最小化">
          <svg viewBox="0 0 10 10" className="h-2.5 w-2.5" stroke="#000"><path d="M0 5.500h10" /></svg>
        </button>
        <button aria-label="最大化">
          <svg viewBox="0 0 10 10" className="h-2.5 w-2.5" stroke="#000" fill="none"><path d="M0.500 0.500h9v9h-9z" /></svg>
        </button>
        <button aria-label="关闭">
          <svg viewBox="0 0 10 10" className="h-2.5 w-2.5" stroke="#000"><path d="M0 0l10 10M10 0L0 10" /></svg>
        </button>
      </div>
    </div>
    <div className="flex border-r-2 border-b-2 border-[#a0a0a0]">
      <Gallery />
      <span className="w-px bg-[#a0a0a0]" />
      <Preview />
    </div>
    <div className="flex h-9 items-center justify-end gap-[15px] border-t border-white pr-[26px]">
      <button className="h-[26px] w-[89px] border border-[#adadad] bg-[#e1e1e1]">确定</button>
      <button className="h-[26px] w-[89px] border border-[#adadad] bg-[#e1e1e1]">取消</button>
    </div>
  </section>
);

/* ---------- windows lying over the workspace ---------- */

const BackWindow: React.FC = () => (
  <div className="absolute top-[232px] left-[900px] z-10 h-[327px] w-[303px] border border-[#3f4a5a] bg-gradient-to-b from-[#b4c5da] via-[#dbe4f0] to-[#d3deec] pt-[30px] pr-2 pb-2">
    <div className="flex h-full flex-col border-r border-b border-[#9a9a9a]">
      <div className="h-[34px] bg-[#f0f0f0]" />
      <div className="flex-1 bg-black" />
      <div className="h-11 bg-[#f0f0f0]" />
    </div>
  </div>
);

const PointPopup: React.FC = () => (
  <div className="absolute top-[220px] left-[76px] z-20 w-[52px] bg-white shadow-[1px_2px_6px_rgba(0,0,0,0.35)]">
    <div className="flex h-6 items-center pb-0.5 text-[#9a9a9a]">
      <span className="flex-1 pl-[3px]">Poi...</span>
      <button aria-label="关闭" className="h-5 w-5 bg-[#dcdcdc] text-[10px] text-[#f0f0f0]">×</button>
    </div>
    <button className="block h-[23px] w-full border-2 border-t border-l border-[#6a6a6a] bg-[#f0f0f0] leading-5">开始</button>
  </div>
);

const App: React.FC = () => (
  <div className="relative flex h-screen min-h-[688px] w-full flex-col overflow-hidden bg-[#f0f0f0] font-['Noto_Sans','Noto_Sans_CJK_SC',sans-serif] text-[12px] leading-4 text-black">
    <TitleBar />
    <MenuBar />
    <MainToolbar />
    <div className="flex min-h-0 flex-1">
      <Sidebar />
      <div className="flex min-w-0 flex-1 flex-col">
        <ComponentToolbar />
        <main className="flex flex-1 pt-6 pr-1 pl-[5px]">
          <div className="w-[184px] shrink-0 border-x-2 border-t border-[#9a9a9a] bg-white" />
          <div className="ml-[7px] flex-1 border-x border-t border-[#a0a0a0] bg-white" />
        </main>
      </div>
    </div>
    <BackWindow />
    <ParameterDialog />
    <PointPopup />
    <div className="absolute -top-[29px] left-[1153px] z-20 flex h-12 w-12 items-end justify-center rounded-full border-2 border-[#d5ded7] bg-[#38cc5c] pb-0.5 text-[11px] font-bold text-white shadow-md">70</div>
  </div>
);

export default App;
